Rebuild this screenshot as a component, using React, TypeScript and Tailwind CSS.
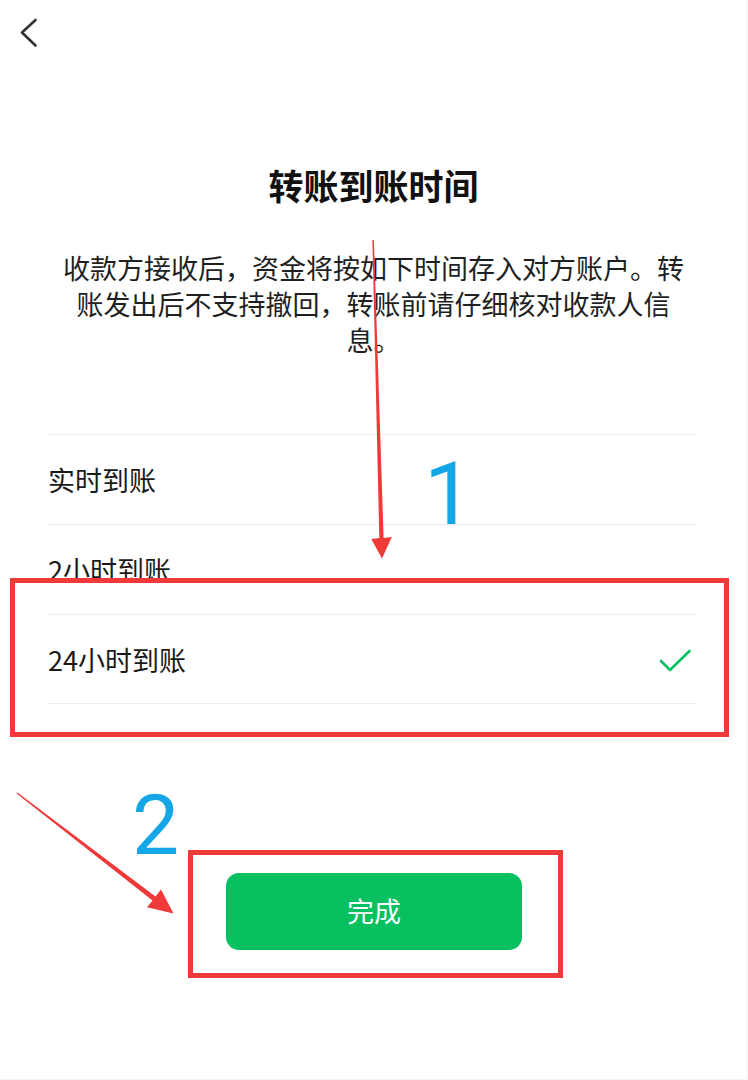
import { useState } from 'react'

const options = ['实时到账', '2小时到账', '24小时到账']

export default function App() {
  const [selected, setSelected] = useState(2)

  return (
    <div className="relative w-[748px] h-[1080px] overflow-hidden bg-white border-r border-b border-[#f3f3f3] font-['Noto_Sans_CJK_SC','Noto_Sans',sans-serif] text-[#1a1a1a]">
      {/* 顶部导航 */}
      <div className="h-[66px] pl-[19px] pt-[18px]">
        <svg width="20" height="30" viewBox="0 0 20 30" fill="none">
          <path d="M16.5 2 L3 14.5 L16.5 27.5" stroke="#333" strokeWidth="2.6" strokeLinecap="round" strokeLinejoin="round" />
        </svg>
      </div>

      <h1 className="mt-[101px] h-[35px] text-center text-[35px] leading-[35px] font-bold text-[#111]">转账到账时间</h1>

      <p className="mx-auto mt-[48px] w-[632px] text-center text-[27px] leading-[36px] text-[#1f1f1f]">
        收款方接收后，资金将按如下时间存入对方账户。转账发出后不支持撤回，转账前请仔细核对收款人信息。
      </p>

      {/* 到账时间选项 */}
      <div className="ml-[48px] mr-[51px] mt-[76px]">
        {options.map((label, i) => (
          <div
            key={label}
            onClick={() => setSelected(i)}
            className={`flex h-[90px] items-center justify-between border-t border-[#ececec] text-[27px] ${
              i === options.length - 1 ? 'border-b' : ''
            }`}
          >
            <span className="pt-[2px]">{label}</span>
            {selected === i && (
              <svg width="34" height="24" viewBox="0 0 34 24" fill="none" className="mr-[3px] mt-[3px]">
                <path d="M2 12 L11 21 L30.5 2" stroke="#07c160" strokeWidth="2.6" strokeLinecap="round" strokeLinejoin="round" />
              </svg>
            )}
          </div>
        ))}
      </div>

      <div className="mt-[169px] flex justify-center pl-[1px]">
        <button className="h-[77px] w-[296px] rounded-[13px] bg-[#07c160] text-[27px] text-white">完成</button>
      </div>

      {/* 标注：红框、箭头、数字 */}
      <div className="absolute left-[10px] top-[578px] h-[159px] w-[719px] border-[5px] border-[#f03a3a]" />
      <div className="absolute left-[188px] top-[850px] h-[128px] w-[375px] border-[5px] border-[#f03a3a]" />

      <svg className="absolute left-0 top-0" width="748" height="1080" viewBox="0 0 748 1080">
        <polygon
          fill="#f03a3a"
          points="372.4,240 373.9,240 383.6,538 391.8,537 382,558.5 371.3,539 379.3,538"
        />
        <polygon
          fill="#f03a3a"
          points="17.4,792.5 155.5,896.4 161,889.5 173.5,913.5 147,907.3 152.5,900.4 16.6,793.5"
        />
      </svg>

      <span className="absolute left-[424px] top-[450px] font-['Roboto',sans-serif] text-[88px] leading-[88px] text-[#14a6e6]">1</span>
      <span className="absolute left-[132px] top-[784px] font-['Roboto',sans-serif] text-[84px] leading-[84px] text-[#14a6e6]">2</span>
    </div>
  )
}
